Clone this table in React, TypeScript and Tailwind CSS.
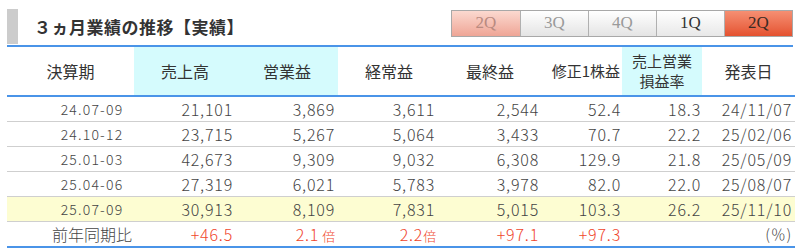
const rows = [
  { term: "24.07-09", sales: "21,101", op: "3,869", ord: "3,611", net: "2,544", eps: "52.4", rate: "18.3", date: "24/11/07" },
  { term: "24.10-12", sales: "23,715", op: "5,267", ord: "5,064", net: "3,433", eps: "70.7", rate: "22.2", date: "25/02/06" },
  { term: "25.01-03", sales: "42,673", op: "9,309", ord: "9,032", net: "6,308", eps: "129.9", rate: "21.8", date: "25/05/09" },
  { term: "25.04-06", sales: "27,319", op: "6,021", ord: "5,783", net: "3,978", eps: "82.0", rate: "22.0", date: "25/08/07" },
  { term: "25.07-09", sales: "30,913", op: "8,109", ord: "7,831", net: "5,015", eps: "103.3", rate: "26.2", date: "25/11/10" },
];

const tabs = [
  { label: "2Q", cls: "bg-gradient-to-b from-[#fbd9d0] to-[#eea596] text-[#b98a80]" },
  { label: "3Q", cls: "bg-gradient-to-b from-white to-[#e4e4e4] text-[#9a9a9a]" },
  { label: "4Q", cls: "bg-gradient-to-b from-white to-[#e4e4e4] text-[#9a9a9a]" },
  { label: "1Q", cls: "bg-gradient-to-b from-white to-[#e8e8e8] text-[#333]" },
  { label: "2Q", cls: "bg-gradient-to-b from-[#f58f72] to-[#e4512f] text-[#3a2a24]" },
];

export default function App() {
  return (
    <div className="w-[800px] h-[248px] bg-white px-[7px] pt-[9px] text-[#333]" style={{ fontFamily: '"Noto Sans CJK JP", "Noto Sans", sans-serif' }}>
      <div className="flex items-center h-[35px]">
        <div className="w-[11px] h-[35px] bg-[#cccccc]" />
        <div className="ml-[16px] text-[17px] font-bold tracking-[0.5px] text-[#333]">３ヵ月業績の推移【実績】</div>
        <div className="ml-auto flex h-[27px] mb-[7px] border border-[#a8a8a8]" style={{ fontFamily: '"Liberation Serif", serif' }}>
          {tabs.map((t, i) => (
            <div
              key={i}
              className={`w-[68px] flex items-center justify-center text-[17px] ${t.cls} ${i > 0 ? "border-l border-[#b0b0b0]" : ""}`}
            >
              {t.label}
            </div>
          ))}
        </div>
      </div>
      <div className="h-[2px] bg-[#4a94e8] mt-[1px]" />
      <table className="w-[788px] table-fixed border-collapse">
        <colgroup>
          <col className="w-[127px]" />
          <col className="w-[102px]" />
          <col className="w-[102px]" />
          <col className="w-[102px]" />
          <col className="w-[100px]" />
          <col className="w-[82px]" />
          <col className="w-[80px]" />
          <col className="w-[93px]" />
        </colgroup>
        <thead>
          <tr className="h-[49px] text-[16px] border-b-2 border-[#4a94e8]">
            <th className="font-normal text-center">決算期</th>
            <th className="font-normal text-center bg-[#d5fbfd]">売上高</th>
            <th className="font-normal text-center bg-[#d5fbfd]">営業益</th>
            <th className="font-normal text-center">経常益</th>
            <th className="font-normal text-center">最終益</th>
            <th className="font-normal text-right pr-[2px] text-[15px] whitespace-nowrap">修正1株益</th>
            <th className="font-normal text-center bg-[#d5fbfd] leading-[20px] text-[15px]">
              売上営業
              <br />
              損益率
            </th>
            <th className="font-normal text-center">発表日</th>
          </tr>
        </thead>
        <tbody>
          {rows.map((r, i) => (
            <tr
              key={r.term}
              className={`h-[24.5px] text-[16px] font-light tracking-[0.8px] text-[#444] border-b border-[#cfcfcf] ${i === rows.length - 1 ? "bg-[#fdfdd2]" : ""}`}
            >
              <td className="pl-[43px] text-center text-[14px] tracking-[1.2px]">{r.term}</td>
              <td className="text-right pr-[3px]">{r.sales}</td>
              <td className="text-right pr-[3px]">{r.op}</td>
              <td className="text-right pr-[5px]">{r.ord}</td>
              <td className="text-right pr-[1px]">{r.net}</td>
              <td className="text-right pr-[1px]">{r.eps}</td>
              <td className="text-right pr-[1px]">{r.rate}</td>
              <td className="text-right pr-[3px]">{r.date}</td>
            </tr>
          ))}
          <tr className="h-[25px] text-[16px] font-light tracking-[0.8px] text-[#f0462c] border-b-2 border-[#4a94e8]">
            <td className="pl-[43px] text-center text-[16px] tracking-normal font-light text-[#444]">前年同期比</td>
            <td className="text-right pr-[3px]">+46.5</td>
            <td className="text-right pr-[2px]">
              2.1<span className="text-[13px] ml-[3px]">倍</span>
            </td>
            <td className="text-right pr-[3px]">
              2.2<span className="text-[13px]">倍</span>
            </td>
            <td className="text-right pr-[1px]">+97.1</td>
            <td className="text-right pr-[1px]">+97.3</td>
            <td />
            <td className="text-right pr-[3px] text-[#444] text-[15px]">(％)</td>
          </tr>
        </tbody>
      </table>
    </div>
  );
}
